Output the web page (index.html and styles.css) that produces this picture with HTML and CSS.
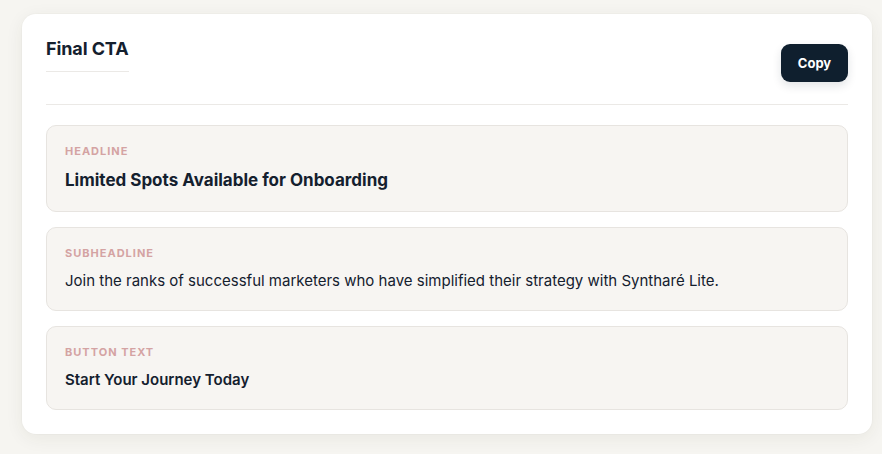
FILE: index.html
```html
<!DOCTYPE html>
<html lang="en">
<head>
<meta charset="utf-8">
<title>Final CTA</title>
<link rel="stylesheet" href="styles.css">
</head>
<body>
<main class="page">
  <section class="card">
    <header class="card-header">
      <h2 class="card-title">Final CTA</h2>
      <button class="copy-btn" type="button">Copy</button>
    </header>
    <div class="fields">
      <div class="field">
        <div class="field-label">Headline</div>
        <div class="field-value headline">Limited Spots Available for Onboarding</div>
      </div>
      <div class="field">
        <div class="field-label">Subheadline</div>
        <div class="field-value sub">Join the ranks of successful marketers who have simplified their strategy with Syntharé Lite.</div>
      </div>
      <div class="field">
        <div class="field-label">Button Text</div>
        <div class="field-value btn-text">Start Your Journey Today</div>
      </div>
    </div>
  </section>
</main>
</body>
</html>
```

FILE: styles.css
```css
* { box-sizing: border-box; }
html, body { margin: 0; padding: 0; }
body {
  background: #f6f5f1;
  font-family: Inter, "Noto Sans", "Liberation Sans", sans-serif;
  color: #14202e;
}
.page {
  padding: 14px 10px 20px 22px;
}
.card {
  width: 850px;
  background: #ffffff;
  border-radius: 14px;
  padding: 24px;
  box-shadow: 0 4px 18px rgba(60, 50, 30, 0.07), 0 0 0 1px rgba(0,0,0,0.015);
}
.card-header {
  display: flex;
  justify-content: space-between;
  align-items: flex-start;
  padding-bottom: 22px;
  border-bottom: 1px solid #ebe9e6;
}
.card-title {
  margin: 0;
  font-size: 18px;
  font-weight: 700;
  line-height: 22px;
  padding-bottom: 11px;
  border-bottom: 1px solid #ebe9e6;
  color: #14202e;
  letter-spacing: -0.1px;
}
.copy-btn {
  margin-top: 6px;
  height: 38px;
  width: 67px;
  border: none;
  border-radius: 9px;
  background: #0f1f2e;
  color: #ffffff;
  font-family: Inter, "Noto Sans", sans-serif;
  font-weight: 700;
  font-size: 13px;
  box-shadow: 0 4px 10px rgba(15, 31, 46, 0.12);
}
.fields {
  display: flex;
  flex-direction: column;
  gap: 15px;
  margin-top: 20px;
}
.field {
  background: #f7f5f2;
  border: 1px solid #e7e4e0;
  border-radius: 10px;
  padding: 18px 18px;
}
.field-label {
  font-size: 11px;
  font-weight: 700;
  line-height: 15px;
  letter-spacing: 1px;
  text-transform: uppercase;
  color: #d4a3a3;
  margin-bottom: 8px;
}
.field-value {
  color: #14202e;
}
.headline {
  font-size: 17px;
  font-weight: 700;
  line-height: 26px;
}
.sub {
  font-size: 15px;
  font-weight: 400;
  line-height: 23px;
}
.btn-text {
  font-size: 15px;
  font-weight: 600;
  line-height: 23px;
}
```
